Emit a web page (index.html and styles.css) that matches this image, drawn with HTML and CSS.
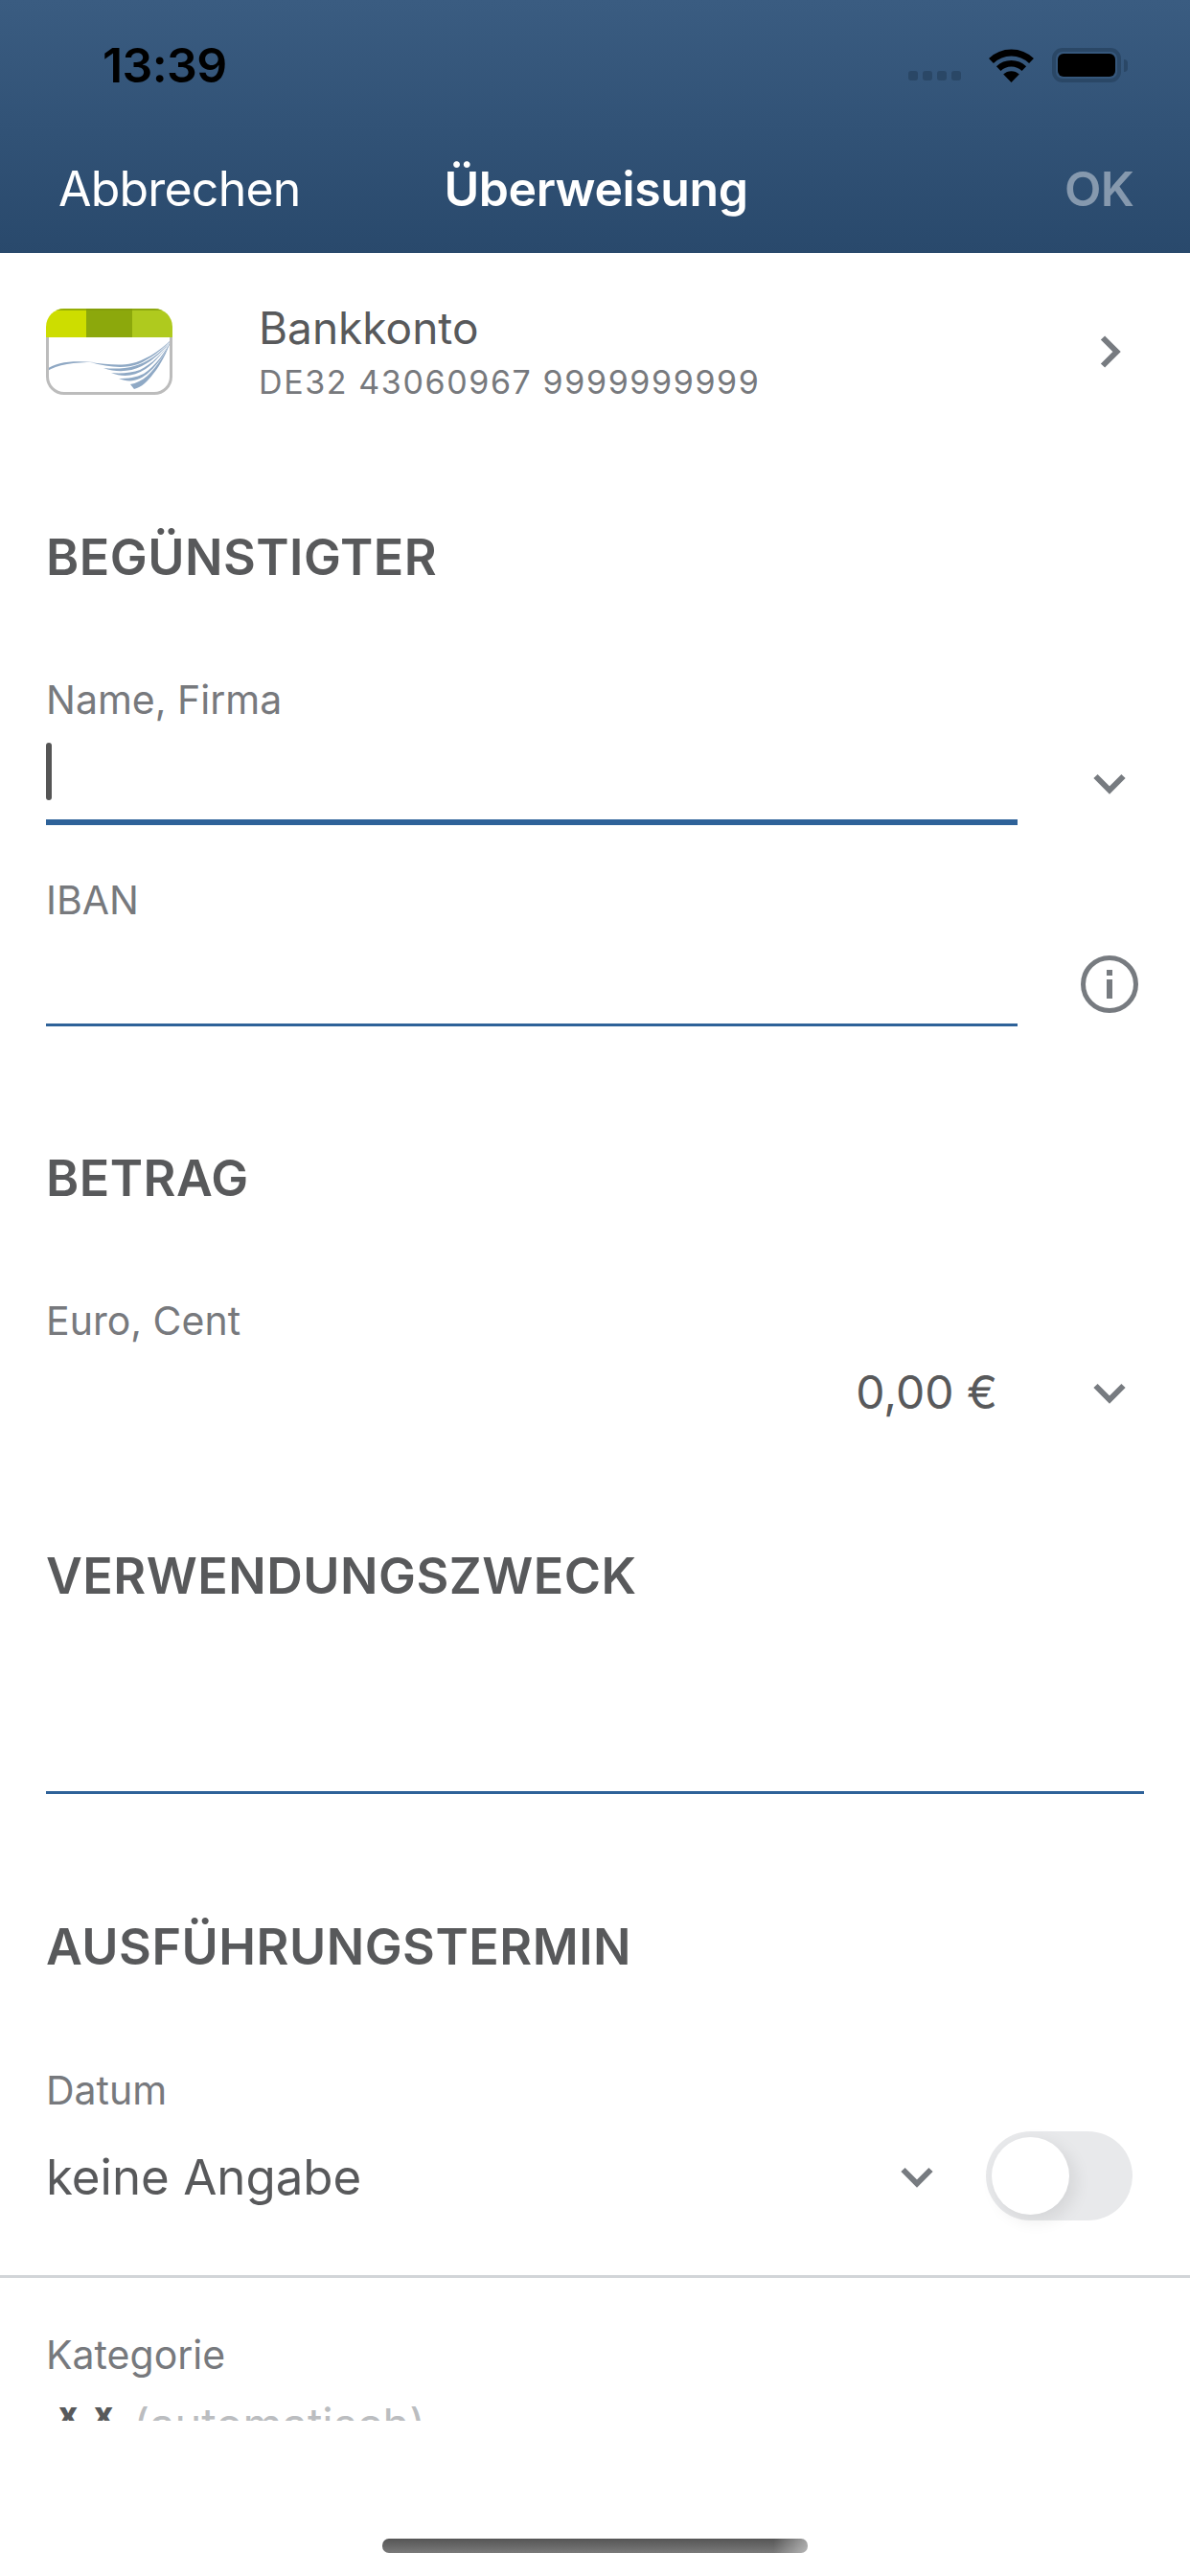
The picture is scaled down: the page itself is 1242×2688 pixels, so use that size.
FILE: index.html
```html
<!DOCTYPE html>
<html lang="de">
<head>
<meta charset="utf-8">
<title>Überweisung</title>
<link rel="stylesheet" href="styles.css">
</head>
<body>
<div class="app">
  <header class="header">
    <div class="status">
      <span class="time">13:39</span>
      <div class="status-icons">
        <div class="signal"><i></i><i></i><i></i><i></i></div>
        <svg class="wifi" viewBox="0 0 47 36" width="47" height="36"><path d="M2.5 13.5 A30 30 0 0 1 44.5 13.5" fill="none" stroke="#000" stroke-width="7"/><path d="M10.2 21.6 A19 19 0 0 1 36.8 21.6" fill="none" stroke="#000" stroke-width="6.5"/><path d="M23.5 36 L15.2 27.6 A11.7 11.7 0 0 1 31.8 27.6 Z" fill="#000"/></svg>
        <div class="battery"><div class="battery-fill"></div></div>
        <div class="battery-cap"></div>
      </div>
    </div>
    <nav class="nav">
      <span class="nav-cancel">Abbrechen</span>
      <span class="nav-title">Überweisung</span>
      <span class="nav-ok">OK</span>
    </nav>
  </header>

  <main class="scroll">
    <div class="account">
      <svg class="bank-logo" viewBox="0 0 132 90" width="132" height="90">
        <defs><clipPath id="card"><rect x="0" y="0" width="132" height="90" rx="19"/></clipPath></defs>
        <g clip-path="url(#card)">
          <rect width="132" height="90" fill="#fff"/>
          <rect x="0" y="0" width="42" height="30" fill="#cddd00"/>
          <rect x="42" y="0" width="48" height="30" fill="#8ca80c"/>
          <rect x="90" y="0" width="42" height="30" fill="#afca1e"/>
          <rect x="0" y="0" width="132" height="2" fill="#7f9a08" opacity=".7"/>
          <path d="M0 64 C10 55 30 54 50 56 C30 56 12 58 0 66 Z" fill="#8fa8c4"/>
          <g fill="#8fa9c5">
            <path d="M132 31 C118 46 100 55 90 57 C78 60 62 58 46 56 C64 61 82 63 96 58 C108 53 122 43 132 31 Z"/>
            <path d="M132 31 C120 47 104 57 92 60 C82 63 70 63 60 62 C74 67 88 66 100 60 C112 54 124 43 132 31 Z"/>
            <path d="M132 31 C122 47 110 58 98 64 C90 67 78 68 68 67 C80 72 92 71 104 63 C114 56 124 44 132 31 Z"/>
            <path d="M132 31 C124 46 114 60 102 68 C94 72 86 73 76 73 C88 78 98 75 108 66 C118 57 126 44 132 31 Z"/>
            <path d="M130 34 C124 48 116 60 106 70 C100 75 94 78 88 79 L92 84 C100 82 106 76 112 68 C120 58 126 46 130 34 Z"/>
          </g>
        </g>
        <path d="M1.5 30 V71 A17.5 17.5 0 0 0 19 88.5 H113 A17.5 17.5 0 0 0 130.500 71 V30" fill="none" stroke="#bcbcbc" stroke-width="3"/>
      </svg>
      <div class="account-text">
        <div class="account-name">Bankkonto</div>
        <div class="account-iban">DE32 43060967 9999999999</div>
      </div>
      <svg class="icon" viewBox="0 0 60 60" width="60" height="60"><polyline points="23,15.500 37.500,30 23,44.500" fill="none" stroke="#777b80" stroke-width="6"/></svg>
    </div>

    <section class="section">
      <h2 class="title">BEGÜNSTIGTER</h2>
      <div class="row row-name">
        <div class="field">
          <div class="label">Name, Firma</div>
          <div class="input input-focus"><div class="caret"></div></div>
        </div>
        <svg class="icon icon-end" viewBox="0 0 60 60" width="60" height="60"><polyline points="15.500,23 30,37.500 44.500,23" fill="none" stroke="#777b80" stroke-width="6"/></svg>
      </div>
      <div class="row row-iban">
        <div class="field">
          <div class="label">IBAN</div>
          <div class="input"></div>
        </div>
        <svg class="icon icon-end" viewBox="0 0 60 60" width="60" height="60"><circle cx="30" cy="30" r="27.500" fill="none" stroke="#777b80" stroke-width="5"/><rect x="27" y="15" width="6" height="6" fill="#777b80"/><rect x="27" y="25" width="6" height="20" fill="#777b80"/></svg>
      </div>
    </section>

    <section class="section section-amount">
      <h2 class="title">BETRAG</h2>
      <div class="label">Euro, Cent</div>
      <div class="amount-row">
        <span class="amount">0,00 €</span>
        <svg class="icon" viewBox="0 0 60 60" width="60" height="60"><polyline points="15.500,23 30,37.500 44.500,23" fill="none" stroke="#777b80" stroke-width="6"/></svg>
      </div>
    </section>

    <section class="section section-purpose">
      <h2 class="title">VERWENDUNGSZWECK</h2>
      <div class="purpose-input"></div>
    </section>

    <section class="section section-date">
      <h2 class="title">AUSFÜHRUNGSTERMIN</h2>
      <div class="label">Datum</div>
      <div class="date-row">
        <span class="date-value">keine Angabe</span>
        <svg class="icon" viewBox="0 0 60 60" width="60" height="60"><polyline points="15.500,23 30,37.500 44.500,23" fill="none" stroke="#777b80" stroke-width="6"/></svg>
        <div class="toggle"><div class="knob"></div></div>
      </div>
    </section>

    <div class="separator"></div>

    <section class="section section-cat">
      <div class="label">Kategorie</div>
      <div class="cat-value"><span class="cat-x">x</span><span class="cat-x">x</span><span class="cat-auto">(automatisch)</span></div>
    </section>
  </main>

  <div class="home-area"><div class="home-bar"></div></div>
</div>
</body>
</html>
```
FILE: styles.css
```css
* { box-sizing: border-box; }
html, body { margin: 0; padding: 0; background: #fff; }
body { width: 1242px; height: 2688px; overflow: hidden; font-family: Inter, "Noto Sans", sans-serif; color: #58595b; }
.app { width: 1242px; height: 2688px; display: flex; flex-direction: column; }

.header { height: 264px; flex: none; background: linear-gradient(180deg, #3a5c81 0%, #29496c 100%); }
.status { height: 136px; display: flex; justify-content: space-between; align-items: center; padding: 0 65px 0 107px; }
.time { font-size: 50px; font-weight: 600; color: #000; line-height: 60px; letter-spacing: -0.6px; }
.status-icons { display: flex; align-items: center; }
.signal { display: flex; gap: 5px; margin-right: 29px; margin-top: 22px; }
.signal i { display: block; width: 10px; height: 10px; border-radius: 3px; background: #2a4766; }
.wifi { margin-right: 19px; display: block; }
.battery { width: 72px; height: 36px; border: 4px solid #2a4766; border-radius: 11px; padding: 2px; }
.battery-fill { width: 100%; height: 100%; background: #000; border-radius: 6px; }
.battery-cap { width: 4px; height: 13px; margin-left: 3px; background: #2a4766; border-radius: 0 7px 7px 0; }

.nav { height: 122px; display: grid; grid-template-columns: 1fr auto 1fr; align-items: center; padding: 0 59px 0 61px; font-size: 50px; line-height: 60px; color: #fff; letter-spacing: -0.8px; }
.nav-title { font-weight: 600; letter-spacing: -0.4px; }
.nav-ok { font-weight: 600; color: #8699ae; justify-self: end; }

.scroll { height: 2262px; flex: none; overflow: hidden; }

.account { height: 206px; display: flex; align-items: center; padding: 0 54px 0 48px; }
.bank-logo { display: block; flex: none; }
.account-text { flex: 1; margin-left: 90px; }
.account-name { font-size: 46px; line-height: 56px; }
.account-iban { font-size: 34px; line-height: 42px; color: #77797d; letter-spacing: 1.6px; margin-top: 8px; }
.icon { display: block; flex: none; }

.section { padding: 0 48px; }
.title { margin: 0; font-size: 52px; line-height: 60px; font-weight: 600; color: #58595b; letter-spacing: 0.5px; position: relative; top: 1px; }
.section-amount .title, .section-purpose .title, .section-date .title { top: 2px; }
.label { font-size: 41px; line-height: 50px; color: #77797d; }

.section:first-of-type { padding-top: 81px; }
.row { display: flex; align-items: flex-end; padding-right: 6px; }
.row-name { margin-top: 94px; }
.row-iban { margin-top: 53px; }
.field { width: 1014px; flex: none; }
.input { height: 107px; border-bottom: 3px solid #2e6299; display: flex; align-items: center; }
.input-focus { height: 106px; border-bottom-width: 6px; }
.caret { width: 6px; height: 60px; background: #555; border-radius: 3px; }
.icon-end { margin: 0 0 14px 66px; }

.section-amount { margin-top: 127px; }
.section-amount .label { margin-top: 95px; }
.amount-row { height: 98px; display: flex; justify-content: flex-end; align-items: center; padding: 2px 6px 0 0; }
.amount { font-size: 48px; line-height: 60px; margin-right: 87px; }

.section-purpose { margin-top: 112px; }
.purpose-input { height: 199px; border-bottom: 3px solid #2e6299; }

.section-date { margin-top: 128px; }
.section-date .label { margin-top: 96px; }
.date-row { height: 129px; display: flex; align-items: center; padding-right: 12px; }
.date-value { flex: 1; font-size: 51px; line-height: 64px; padding-top: 2px; }
.toggle { width: 153px; height: 93px; margin-left: 42px; background: #e8e9eb; border-radius: 47px; padding: 6px; }
.knob { width: 81px; height: 81px; border-radius: 50%; background: #fff; box-shadow: 6px 6px 18px rgba(0,0,0,.09); }

.separator { height: 3px; margin-top: 39px; background: #d2d5d8; }

.section-cat { padding-top: 55px; }
.cat-value { margin-top: 18px; height: 60px; display: flex; align-items: center; font-size: 47px; line-height: 60px; }
.cat-x { width: 37px; padding-left: 13px; align-self: flex-start; margin-top: 4px; font-size: 34px; line-height: 30px; font-weight: 800; color: #58595b; }
.cat-auto { margin-left: 17px; color: #bbbdc0; }

.home-area { flex: 1; display: flex; justify-content: center; padding-top: 123px; }
.home-bar { width: 444px; height: 15px; border-radius: 7px; background: linear-gradient(90deg, transparent 92%, rgba(255,255,255,.45)), linear-gradient(180deg, #555 0%, #7a7a7a 100%); }
```
